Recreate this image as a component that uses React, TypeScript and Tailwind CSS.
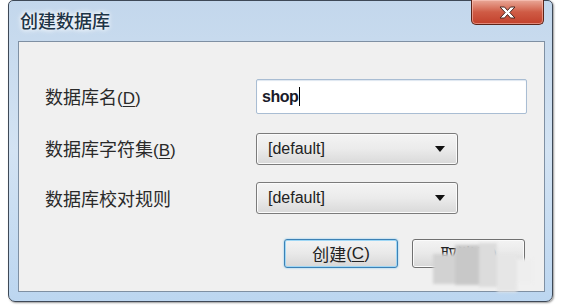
const cjk = { fontFamily: '"Noto Sans CJK SC", "Liberation Sans", sans-serif' };
const latin = { fontFamily: '"Liberation Sans", "Noto Sans CJK SC", sans-serif' };

function Combo({ value }: { value: string }) {
  return (
    <div className="flex h-[32px] w-[202px] items-center justify-between rounded-[3px] border border-[#7b7b7b] bg-gradient-to-b from-[#f4f4f4] via-[#ebebeb] to-[#d9d9d9] pl-[11px] pr-[12px] shadow-[inset_0_0_0_1px_#fbfbfb]">
      <span className="text-[16px] text-[#222]" style={latin}>{value}</span>
      <svg width="10" height="6" viewBox="0 0 10 6">
        <path d="M0 0h10L5 6z" fill="#111" />
      </svg>
    </div>
  );
}

function Label({ text, hot }: { text: string; hot?: string }) {
  return (
    <div className="w-[211px] text-[18px] leading-none text-[#2a2a2a]" style={cjk}>
      {text}
      {hot && (
        <span className="text-[17px]" style={latin}>
          (<span className="underline underline-offset-2">{hot}</span>)
        </span>
      )}
    </div>
  );
}

export default function App() {
  return (
    <div className="h-[305px] w-[564px] overflow-hidden bg-white pl-[8px]">
      <div className="relative flex h-[302px] w-[545px] flex-col rounded-b-[7px] rounded-t-[5px] border border-[#3e4957] bg-gradient-to-b from-[#c3d7ec] via-[#d3e3f3] to-[#bcd6f0] shadow-[1px_1px_2px_rgba(0,0,0,0.4)]">
        <div className="flex h-[40px] items-start justify-between">
          <div className="pl-[11px] pt-[8px] text-[18px] font-medium leading-[22px] text-[#1d3446] [text-shadow:0_0_6px_#fff,0_0_4px_#fff]" style={cjk}>
            创建数据库
          </div>
          <div className="mr-[8px] -mt-px flex h-[25px] w-[73px] items-center justify-center rounded-b-[5px] border border-t-0 border-[#5c2418] bg-gradient-to-b from-[#e9a898] via-[#cf5b45] to-[#c2402b] shadow-[inset_0_0_0_1px_rgba(255,210,200,0.5)]">
            <svg width="17" height="13" viewBox="0 0 17 13">
              <path d="M1 1h4.5l3 3.5 3-3.5H16l-5.2 5.5L16 12h-4.5l-3-3.5-3 3.5H1l5.2-5.5z" fill="#fff" stroke="#4a2a25" strokeWidth="1" strokeLinejoin="round" />
            </svg>
          </div>
        </div>
        <div className="relative mb-[9px] ml-[9px] mr-[7px] flex flex-1 flex-col border border-[#7f90a3] bg-[#f0f0f0] pl-[26px] pt-[37px]">
          <div className="flex h-[35px] items-center">
            <Label text="数据库名" hot="D" />
            <div className="flex h-[35px] w-[271px] items-center rounded-[2px] border border-[#a9bdd3] bg-white pl-[5px] shadow-[inset_0_1px_1px_#dde6f0]">
              <span className="text-[16px] font-semibold tracking-[-0.5px] text-[#1a1a2a]" style={latin}>shop</span>
              <span className="ml-px h-[19px] w-px bg-black" />
            </div>
          </div>
          <div className="mt-[19px] flex h-[32px] items-center">
            <Label text="数据库字符集" hot="B" />
            <Combo value="[default]" />
          </div>
          <div className="mt-[17px] flex h-[32px] items-center">
            <Label text="数据库校对规则" />
            <Combo value="[default]" />
          </div>
          <div className="mt-[25px] flex justify-end gap-[14px] pr-[19px]">
            <button className="flex h-[29px] w-[114px] items-center justify-center rounded-[3px] border border-[#3c81b5] bg-gradient-to-b from-[#f3f3f3] via-[#e9e9e9] to-[#d7d7d7] text-[17px] text-[#222] shadow-[0_0_2px_#6ec1ee,inset_0_0_0_1px_#9fd7f5]" style={cjk}>
              创建<span style={latin}>(<span className="underline underline-offset-2">C</span>)</span>
            </button>
            <button className="flex h-[29px] w-[113px] items-center justify-center rounded-[3px] border border-[#707070] bg-gradient-to-b from-[#f3f3f3] via-[#e9e9e9] to-[#d7d7d7] text-[17px] text-[#222] shadow-[inset_0_0_0_1px_#fbfbfb]" style={cjk}>
              取消<span style={latin}>(<span className="underline underline-offset-2">A</span>)</span>
            </button>
          </div>
          <div className="absolute left-[414px] top-[201px] flex h-[50px] w-[100px] blur-[1.5px]">
            <div className="mt-[11px] h-[30px] w-[22px] bg-[#d2d2d2]" />
            <div className="mt-[2px] h-[40px] w-[24px] bg-[#c8c8c8]" />
            <div className="h-[44px] w-[18px] bg-[#dcdcdc]" />
            <div className="mt-[11px] h-[38px] w-[20px] bg-[#e6e6e6]" />
            <div className="mt-[16px] h-[24px] w-[16px] bg-[#eeeeee]" />
          </div>
        </div>
      </div>
    </div>
  );
}
